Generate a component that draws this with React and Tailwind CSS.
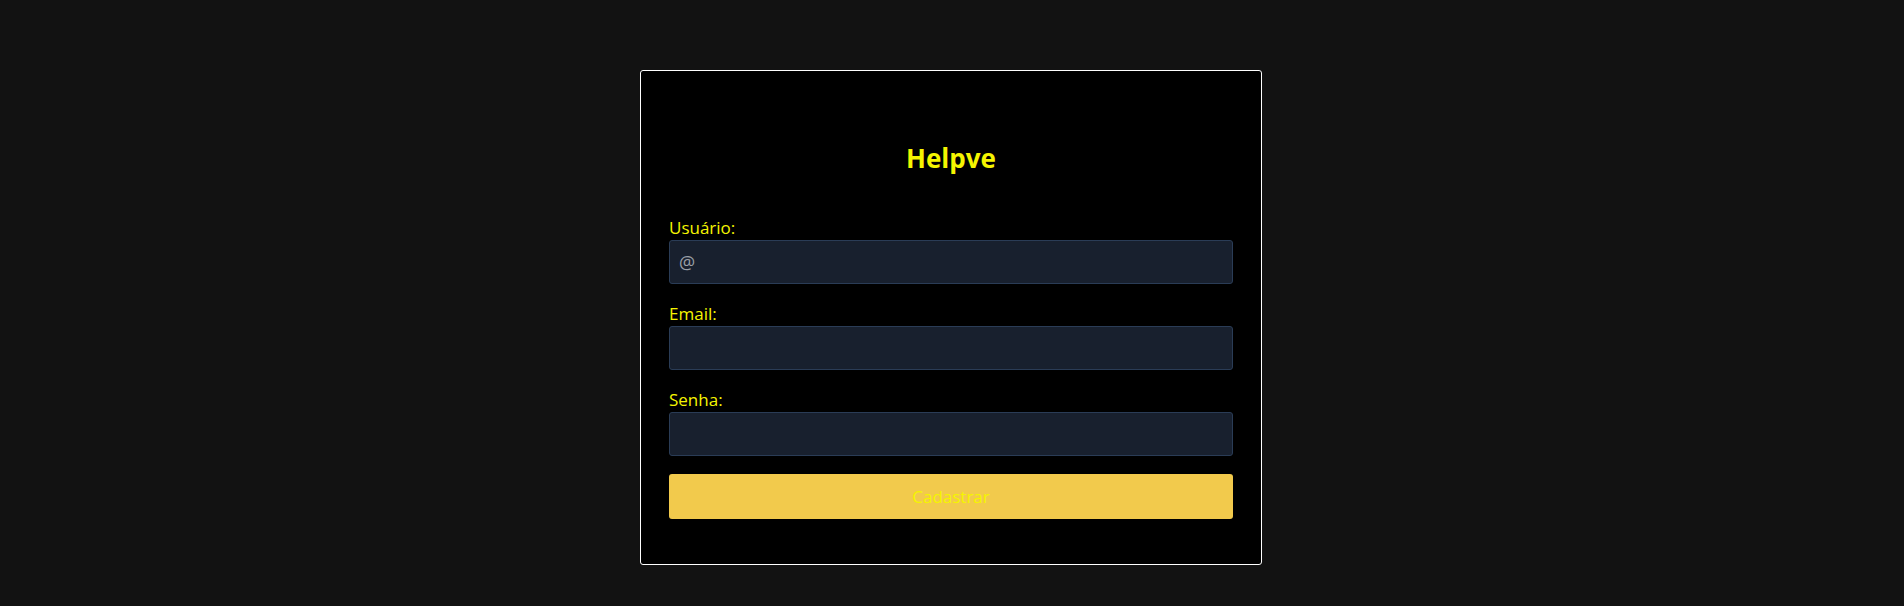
const fields = [
  { id: "usuario", label: "Usuário:", type: "text", placeholder: "@" },
  { id: "email", label: "Email:", type: "email" },
  { id: "senha", label: "Senha:", type: "password" },
];

export default function App() {
  return (
    <main className="flex min-h-screen justify-center bg-[#121212] pt-[70px] pr-[18px] pb-10 pl-4 font-['Segoe_UI','Open_Sans',sans-serif] text-[17px] leading-6 text-[#f5f500]">
      <form
        className="flex w-full max-w-[622px] flex-col gap-[18px] self-start rounded-[3px] border border-white bg-black px-7 pt-[69px] pb-[45px]"
        onSubmit={(event) => event.preventDefault()}
      >
        <h1 className="mb-[22px] text-center text-[26px] leading-9 font-bold">Helpve</h1>
        {fields.map((field) => (
          <div key={field.id} className="flex flex-col">
            <label htmlFor={field.id}>{field.label}</label>
            <input
              id={field.id}
              name={field.id}
              type={field.type}
              placeholder={field.placeholder}
              className="h-11 w-full rounded-[3px] border border-[#2a3c56] bg-[#18202e] px-[9px] outline-none placeholder:text-lg placeholder:text-[#9a9fa6]"
            />
          </div>
        ))}
        <button type="submit" className="h-[45px] w-full rounded-[3px] bg-[#f2ca4c]">
          Cadastrar
        </button>
      </form>
    </main>
  );
}
